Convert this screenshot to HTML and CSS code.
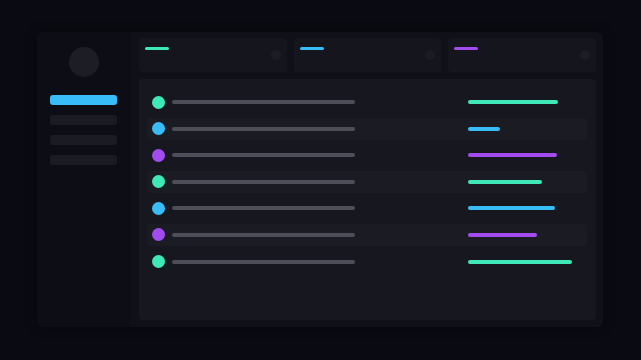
FILE: index.html
```html
<!DOCTYPE html>
<html lang="en">
<head>
  <meta charset="UTF-8">
  <meta name="viewport" content="width=device-width, initial-scale=1.0">
  <title>Dashboard</title>
  <link rel="stylesheet" href="styles.css">
</head>
<body>
  <div class="frame">
    <aside class="sidebar">
      <div class="avatar"></div>
      <nav class="nav">
        <div class="nav-item active"></div>
        <div class="nav-item"></div>
        <div class="nav-item"></div>
        <div class="nav-item"></div>
      </nav>
    </aside>

    <main class="main">
      <div class="cards">
        <div class="card"><span class="accent teal"></span><span class="knob"></span></div>
        <div class="card"><span class="accent blue"></span><span class="knob"></span></div>
        <div class="card"><span class="accent purple"></span><span class="knob"></span></div>
      </div>

      <div class="panel">
        <div class="row">
          <span class="dot teal"></span><span class="label"></span>
          <span class="bar teal" style="width: 90px"></span>
        </div>
        <div class="row">
          <span class="dot blue"></span><span class="label"></span>
          <span class="bar blue" style="width: 32px"></span>
        </div>
        <div class="row">
          <span class="dot purple"></span><span class="label"></span>
          <span class="bar purple" style="width: 89px"></span>
        </div>
        <div class="row">
          <span class="dot teal"></span><span class="label"></span>
          <span class="bar teal" style="width: 74px"></span>
        </div>
        <div class="row">
          <span class="dot blue"></span><span class="label"></span>
          <span class="bar blue" style="width: 87px"></span>
        </div>
        <div class="row">
          <span class="dot purple"></span><span class="label"></span>
          <span class="bar purple" style="width: 69px"></span>
        </div>
        <div class="row">
          <span class="dot teal"></span><span class="label"></span>
          <span class="bar teal" style="width: 104px"></span>
        </div>
      </div>
    </main>
  </div>
</body>
</html>
```

FILE: styles.css
```css
body {
  font-family: "Liberation Sans", Arial, sans-serif;
  background-color: #0a0b12;
  margin: 0;
  padding: 0;
  height: 100vh;
}
.frame {
  display: flex;
  margin: 32px 0 0 37px;
  width: 566px;
  height: 295px;
  border-radius: 6px;
  box-shadow: 0px 0px 12px rgba(0, 0, 0, 0.4);
  overflow: hidden;
}
.sidebar {
  width: 93px;
  background-color: #0d0e15;
  display: flex;
  flex-direction: column;
  align-items: center;
  padding-top: 15px;
  box-sizing: border-box;
}
.avatar {
  width: 30px;
  height: 30px;
  border-radius: 50%;
  background-color: #1d1e25;
}
.nav {
  margin-top: 18px;
  display: flex;
  flex-direction: column;
  gap: 10px;
}
.nav-item {
  width: 67px;
  height: 10px;
  border-radius: 3px;
  background-color: #1b1c23;
}
.nav-item.active {
  background-color: #38bdf8;
}
.main {
  flex: 1;
  background-color: #101118;
  padding: 6px 7px 7px 9px;
  display: flex;
  flex-direction: column;
  gap: 7px;
}
.cards {
  display: flex;
  gap: 7px;
  height: 34px;
}
.card {
  flex: 1;
  background-color: #15161d;
  border-radius: 4px;
  padding: 9px 6px 0 6px;
  position: relative;
}
.accent {
  display: block;
  width: 24px;
  height: 3px;
  border-radius: 2px;
}
.knob {
  position: absolute;
  right: 6px;
  top: 12px;
  width: 10px;
  height: 10px;
  border-radius: 50%;
  background-color: #1c1d24;
}
.panel {
  flex: 1;
  background-color: #17181f;
  border-radius: 4px;
  padding: 12px 9px 0 8px;
  display: flex;
  flex-direction: column;
  gap: 4.6px;
}
.row {
  height: 22px;
  display: flex;
  align-items: center;
  padding-left: 5px;
  border-radius: 3px;
}
.row:nth-child(even) {
  background-color: #1b1c23;
}
.dot {
  width: 13px;
  height: 13px;
  border-radius: 50%;
}
.label {
  width: 183px;
  height: 4px;
  margin-left: 7px;
  border-radius: 2px;
  background-color: #4d4e57;
}
.bar {
  height: 4px;
  margin-left: 113px;
  border-radius: 2px;
}
.teal {
  background-color: #3ee8b8;
}
.blue {
  background-color: #38bdf8;
}
.purple {
  background-color: #a24cf0;
}
```
